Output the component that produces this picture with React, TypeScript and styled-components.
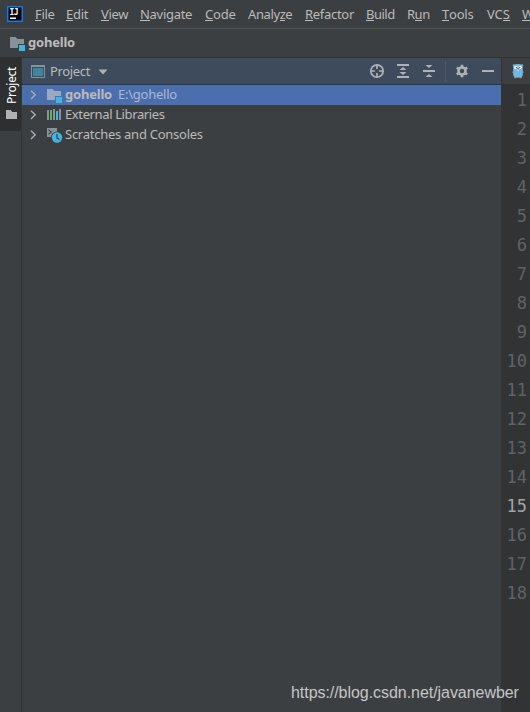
import React from 'react';
import styled, { createGlobalStyle } from 'styled-components';

const GlobalStyle = createGlobalStyle`
  * { box-sizing: border-box; }
  body { margin: 0; background: #3c3f41; overflow: hidden; }
  svg { display: block; flex: none; }
`;

const Window = styled.div`
  position: relative;
  width: 530px;
  height: 712px;
  overflow: hidden;
  display: flex;
  flex-direction: column;
  background: #3c3f41;
  color: #bbbbbb;
  font: 13px/20px 'Noto Sans', 'Open Sans', sans-serif;
  white-space: nowrap;
`;

const MenuBar = styled.div`
  flex: none;
  display: flex;
  align-items: center;
  height: 29px;
  padding-left: 7px;
  border-bottom: 1px solid #515355;
`;

const Menu = styled.div`
  display: flex;
  margin-left: 12px;
`;

const MenuItem = styled.span<{ $width: number; $spacing: number }>`
  flex: none;
  width: ${(p) => p.$width}px;
  letter-spacing: ${(p) => p.$spacing}px;
`;

const Mnemonic = styled.span`
  display: inline-block;
  height: 17px;
  line-height: 20px;
  border-bottom: 1px solid #bbbbbb;
  vertical-align: top;
`;

const NavBar = styled.div`
  flex: none;
  display: flex;
  align-items: center;
  height: 29px;
  padding: 0 0 1px 10px;
  border-bottom: 1px solid #2f3234;
`;

const Strong = styled.span<{ $left: number }>`
  font-weight: 700;
  letter-spacing: -0.2px;
  margin: -2px 0 0 ${(p) => p.$left}px;
`;

const Main = styled.div`
  flex: 1;
  min-height: 0;
  display: flex;
`;

const Stripe = styled.div`
  flex: none;
  width: 22px;
  border-right: 1px solid #323537;
`;

const StripeButton = styled.div`
  height: 73px;
  background: #2d2f30;
  color: #ffffff;
  display: flex;
  flex-direction: column;
  align-items: center;
  padding: 8px 0 0 2px;
`;

const VerticalLabel = styled.span`
  writing-mode: vertical-rl;
  transform: rotate(180deg);
  height: 38px;
  font-size: 12px;
  line-height: 18px;
  letter-spacing: -0.3px;
  margin-bottom: 6px;
`;

const Panel = styled.div`
  flex: none;
  width: 480px;
  display: flex;
  flex-direction: column;
  border-right: 1px solid #323537;
`;

const PanelHeader = styled.div`
  height: 27px;
  display: flex;
  align-items: center;
  background: #3d4b5c;
  border-bottom: 1px solid #323537;
  padding: 0 5px 0 9px;
`;

const Title = styled.span`
  width: 46px;
  letter-spacing: -0.35px;
  margin: 0 2px 0 5px;
`;

const Actions = styled.div`
  margin-left: auto;
  display: flex;
  align-items: center;
  gap: 10px;
`;

const Divider = styled.div`
  width: 1px;
  height: 20px;
  background: #515a66;
  margin: 0 -2px 0 -2px;
`;

const Row = styled.div<{ $selected?: boolean }>`
  height: 20px;
  display: flex;
  align-items: center;
  padding-left: 5px;
  background: ${(p) => (p.$selected ? '#4b6eaf' : 'transparent')};
`;

const RowIcon = styled.div`
  width: 16px;
  margin-left: 8px;
`;

const RowLabel = styled.span<{ $spacing: number }>`
  margin: -2px 0 0 2px;
  letter-spacing: ${(p) => p.$spacing}px;
`;

const Path = styled.span`
  margin: -2px 0 0 6px;
  color: #afb9cb;
  letter-spacing: -0.25px;
`;

const Editor = styled.div`
  flex: 1;
  min-width: 0;
  background: #313335;
`;

const TabBar = styled.div`
  height: 27px;
  padding: 5px 0 0 10px;
  background: #3c3f41;
  border-bottom: 1px solid #323537;
`;

const Gutter = styled.div`
  height: 542px;
  padding: 1px 3px 0 0;
`;

const LineNumber = styled.div<{ $current: boolean }>`
  height: 29px;
  font: 17px/29px 'DejaVu Sans Mono', monospace;
  text-align: right;
  color: ${(p) => (p.$current ? '#a4a3a3' : '#606366')};
`;

const Watermark = styled.div`
  position: absolute;
  left: 291px;
  top: 683px;
  font: 16px/20px 'Liberation Sans', Arial, sans-serif;
  letter-spacing: -0.05px;
  color: #c5c6c7;
`;

const menuItems = [
  { text: 'File', key: 0, width: 31, spacing: -0.3 },
  { text: 'Edit', key: 0, width: 35, spacing: -0.3 },
  { text: 'View', key: 0, width: 39, spacing: -0.3 },
  { text: 'Navigate', key: 0, width: 65, spacing: -0.3 },
  { text: 'Code', key: 0, width: 43, spacing: -0.2 },
  { text: 'Analyze', key: 5, width: 57, spacing: -0.4 },
  { text: 'Refactor', key: 0, width: 61, spacing: -0.3 },
  { text: 'Build', key: 0, width: 41, spacing: -0.5 },
  { text: 'Run', key: 1, width: 35, spacing: -0.5 },
  { text: 'Tools', key: 0, width: 45, spacing: -0.2 },
  { text: 'VCS', key: 2, width: 35, spacing: -0.1 },
  { text: 'Window', key: 0, width: 50, spacing: -0.3 },
];

const Logo = () => (
  <svg width="16" height="16" viewBox="0 0 16 16">
    <rect x=".75" y=".75" width="14.5" height="14.5" fill="#000" stroke="#087cfa" strokeWidth="1.5" />
    <text x="2.6" y="9" fill="#fff" fontFamily="DejaVu Sans Mono" fontWeight="700" fontSize="8" textLength="9">IJ</text>
    <path d="M3 11.5h6V13H3z" fill="#fff" />
  </svg>
);

const ModuleFolder = ({ color = '#87939a', gap = '#3c3f41' }) => (
  <svg width="16" height="16" viewBox="0 0 16 16">
    <path d="M0 2h5.5l2 2H14v9H0z" fill={color} />
    <path d="M8 9h7v6H8z" fill={gap} />
    <path d="M9 10h6v6H9z" fill="#40b6e0" />
  </svg>
);

const StripeFolder = () => (
  <svg width="11" height="10" viewBox="0 0 11 10">
    <path d="M0 0h4.7l1.5 2H11v7H0z" fill="#afb1b3" />
  </svg>
);

const Chevron = () => (
  <svg width="12" height="12" viewBox="0 0 12 12">
    <path d="M4 1.7l4.2 4.1L4 9.9" fill="none" stroke="#a9b0b5" strokeWidth="1.4" />
  </svg>
);

const ProjectWindow = () => (
  <svg width="14" height="13" viewBox="0 0 14 13">
    <path d="M.5.5h13v12H.5z" fill="#3d4b5c" stroke="#87939a" />
    <path d="M0 0h14v2H0z" fill="#87939a" />
    <path d="M2 3h10v8H2z" fill="#3e86a0" />
  </svg>
);

const Libraries = () => (
  <svg width="16" height="16" viewBox="0 0 16 16">
    <path d="M0 3h2v10H0zM6 2h2v11H6zM12 2h2v11h-2z" fill="#87939a" />
    <path d="M3 3h2v10H3z" fill="#62b543" />
    <path d="M9 4h2v9H9z" fill="#40b6e0" />
  </svg>
);

const Scratches = () => (
  <svg width="16" height="16" viewBox="0 0 16 16">
    <path d="M0 1h10v9H0z" fill="#87939a" />
    <path d="M1.5 2.7l2.7 2.3-2.7 2.3M5 8h4" fill="none" stroke="#3c3f41" strokeWidth="1.1" />
    <circle cx="10" cy="10.5" r="6" fill="#3c3f41" />
    <circle cx="10" cy="10.5" r="5.2" fill="#40b6e0" />
    <path d="M10 7v4l2.5 1.6" fill="none" stroke="#3c3f41" strokeWidth="1.2" />
  </svg>
);

const Locate = () => (
  <svg width="16" height="16" viewBox="0 0 16 16" fill="none" stroke="#afb1b3" strokeWidth="1.7">
    <circle cx="8" cy="8" r="6.2" />
    <path d="M8 2v4M8 10v4M2 8h4M10 8h4" />
  </svg>
);

const ExpandAll = () => (
  <svg width="16" height="16" viewBox="0 0 16 16" fill="#afb1b3">
    <path d="M2 1h12v2H2zM2 13h12v2H2zM8 4l3.5 3h-7zM8 12L4.5 9h7z" />
  </svg>
);

const CollapseAll = () => (
  <svg width="16" height="16" viewBox="0 0 16 16" fill="#afb1b3">
    <path d="M2 7h12v2H2zM8 5L4.5 2h7zM8 11l3.5 3h-7z" />
  </svg>
);

const Gear = () => (
  <svg width="16" height="16" viewBox="0 0 16 16">
    <circle cx="8" cy="8" r="3.5" fill="none" stroke="#afb1b3" strokeWidth="2.6" />
    <path
      d="M6.7 1.8h2.6v2.4H6.7zM6.7 11.8h2.6v2.4H6.7z"
      fill="#afb1b3"
    />
    <path
      d="M2.1 5.8l1.3-2.3 2.2 1.3-1.3 2.3zM10.4 11.2l1.3-2.3 2.2 1.3-1.3 2.3zM3.4 12.5l-1.3-2.3 2.2-1.3 1.3 2.3zM11.7 7.1l-1.3-2.3 2.2-1.3 1.3 2.3z"
      fill="#afb1b3"
    />
  </svg>
);

const Minimize = () => (
  <svg width="16" height="16" viewBox="0 0 16 16">
    <path d="M2 7h12v2H2z" fill="#afb1b3" />
  </svg>
);

const Gopher = () => (
  <svg width="12" height="16" viewBox="0 0 12 16">
    <circle cx="2" cy="2.5" r="1.3" fill="#6aaed6" />
    <circle cx="10" cy="2.5" r="1.3" fill="#6aaed6" />
    <path d="M1.2 5Q1.2 1 6 1t4.8 4v6.5q0 3.3-4.8 3.3t-4.8-3.3z" fill="#6fb9e4" />
    <circle cx="3.8" cy="4.3" r="1.6" fill="#fff" />
    <circle cx="8.2" cy="4.3" r="1.6" fill="#fff" />
    <path d="M3.8 4h1v1h-1zM7.2 4h1v1h-1zM5.2 5.3h1.6v1H5.2z" fill="#333" />
    <path d="M5.3 6.3h1.4v1.2H5.3z" fill="#f4efe8" />
    <path d="M.5 8.5h1v1.5h-1zM10.5 8.5h1v1.5h-1zM2.3 14h1.8v1.2H2.3zM7.9 14h1.8v1.2H7.9z" fill="#b89275" />
  </svg>
);

const Arrow = () => (
  <svg width="10" height="7" viewBox="0 0 10 7">
    <path d="M.5 1.5h9L5 6.5z" fill="#afb1b3" />
  </svg>
);

export default function App() {
  return (
    <>
      <GlobalStyle />
      <Window>
        <MenuBar>
          <Logo />
          <Menu>
            {menuItems.map((m) => (
              <MenuItem key={m.text} $width={m.width} $spacing={m.spacing}>
                {m.text.slice(0, m.key)}
                <Mnemonic>{m.text[m.key]}</Mnemonic>
                {m.text.slice(m.key + 1)}
              </MenuItem>
            ))}
          </Menu>
        </MenuBar>
        <NavBar>
          <ModuleFolder />
          <Strong $left={2}>gohello</Strong>
        </NavBar>
        <Main>
          <Stripe>
            <StripeButton>
              <VerticalLabel>Project</VerticalLabel>
              <StripeFolder />
            </StripeButton>
          </Stripe>
          <Panel>
            <PanelHeader>
              <ProjectWindow />
              <Title>Project</Title>
              <Arrow />
              <Actions>
                <Locate />
                <ExpandAll />
                <CollapseAll />
                <Divider />
                <Gear />
                <Minimize />
              </Actions>
            </PanelHeader>
            <Row $selected>
              <Chevron />
              <RowIcon><ModuleFolder color="#9aa9c4" gap="#4b6eaf" /></RowIcon>
              <Strong $left={2}>gohello</Strong>
              <Path>E:\gohello</Path>
            </Row>
            <Row>
              <Chevron />
              <RowIcon><Libraries /></RowIcon>
              <RowLabel $spacing={-0.38}>External Libraries</RowLabel>
            </Row>
            <Row>
              <Chevron />
              <RowIcon><Scratches /></RowIcon>
              <RowLabel $spacing={-0.26}>Scratches and Consoles</RowLabel>
            </Row>
          </Panel>
          <Editor>
            <TabBar><Gopher /></TabBar>
            <Gutter>
              {Array.from({ length: 18 }, (_, i) => (
                <LineNumber key={i} $current={i === 14}>{i + 1}</LineNumber>
              ))}
            </Gutter>
          </Editor>
        </Main>
        <Watermark>https://blog.csdn.net/javanewber</Watermark>
      </Window>
    </>
  );
}
